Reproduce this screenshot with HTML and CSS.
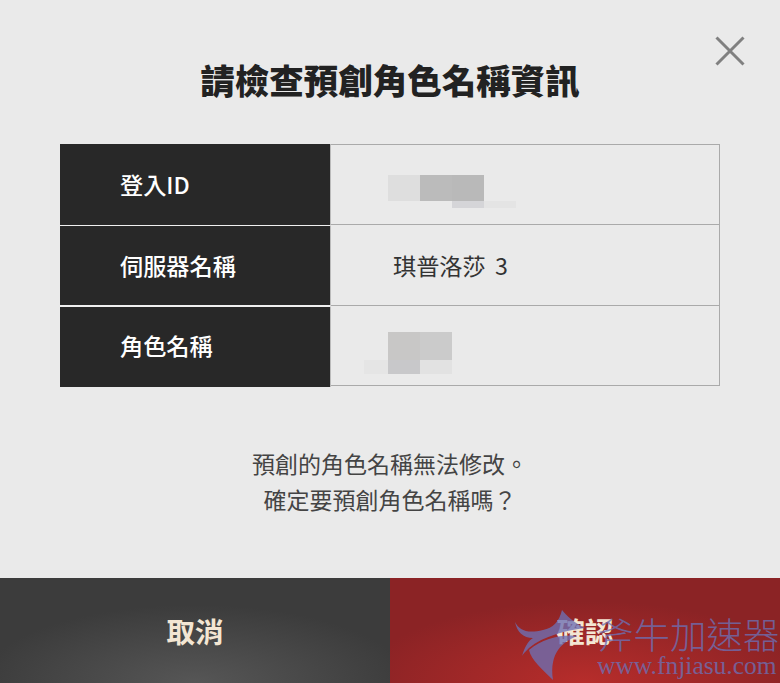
FILE: index.html
```html
<!DOCTYPE html>
<html lang="zh-Hant">
<head>
<meta charset="utf-8">
<title>請檢查預創角色名稱資訊</title>
<link rel="stylesheet" href="styles.css">
</head>
<body>
<div class="dialog">
  <button class="close" aria-label="關閉">
    <svg width="30" height="30" viewBox="0 0 30 30"><path d="M1.5 1.5 L28.5 28.5 M28.5 1.5 L1.5 28.5" stroke="#808080" stroke-width="3" fill="none"/></svg>
  </button>
  <h1 class="title">請檢查預創角色名稱資訊</h1>
  <div class="table">
    <div class="row row-a">
      <div class="label">登入ID</div>
      <div class="value">
        <div class="mosaic mosaic-id">
          <i class="c1"></i><i class="c2"></i><i class="c3"></i><i class="empty"></i>
          <i class="empty"></i><i class="empty"></i><i class="c4"></i><i class="c5"></i>
        </div>
      </div>
    </div>
    <div class="row row-b">
      <div class="label">伺服器名稱</div>
      <div class="value server">琪普洛莎 3</div>
    </div>
    <div class="row row-c">
      <div class="label">角色名稱</div>
      <div class="value">
        <div class="mosaic mosaic-name">
          <i class="empty"></i><i class="d1"></i><i class="d2"></i>
          <i class="d3"></i><i class="d4"></i><i class="d5"></i>
        </div>
      </div>
    </div>
  </div>
  <p class="note">預創的角色名稱無法修改。<br>確定要預創角色名稱嗎？</p>
  <div class="actions">
    <button class="btn cancel">取消</button>
    <button class="btn confirm">確認</button>
  </div>
  <div class="watermark">
    <svg class="wm-logo" width="90" height="73" viewBox="0 0 90 73">
      <path d="M2 12 C6 20 14 24 30 20 C40 18 46 12 49 0 C54 6 60 12 72 18 C55 20 30 26 16 38 C12 42 10 44 9 46 C12 36 16 30 20 28 C10 28 4 22 2 12Z" fill="#6d70b4"/>
      <path d="M16 40 C30 28 50 24 64 26 C50 32 36 42 40 70 C30 60 18 50 16 40Z" fill="#6d70b4"/>
    </svg>
    <div class="wm-text">
      <div class="wm-cn">斧牛加速器</div>
      <div class="wm-en">www.fnjiasu.com</div>
    </div>
  </div>
</div>
</body>
</html>
```
FILE: styles.css
```css
* { box-sizing: border-box; }
html, body { margin: 0; padding: 0; }
body { width: 780px; height: 683px; overflow: hidden; background: #eaeaea; font-family: "Noto Sans CJK TC", "Noto Sans", sans-serif; }
.dialog { position: relative; width: 780px; height: 683px; display: flex; flex-direction: column; align-items: center; background: #eaeaea; overflow: hidden; }
.close { position: absolute; top: 36px; right: 35px; width: 30px; height: 30px; padding: 0; border: 0; background: none; display: block; }
.close svg { display: block; }
.title { margin: 53px 0 0; height: 55px; font-size: 34.5px; line-height: 52px; font-weight: 900; color: #222; white-space: nowrap; }
.table { width: 660px; margin-top: 36px; display: flex; flex-direction: column; }
.row { display: flex; }
.row-a { height: 81px; }
.row-b { height: 81px; }
.row-c { height: 80px; }
.label { width: 271px; background: #282828; color: #fff; font-size: 23.2px; font-weight: 500; padding-left: 60px; padding-bottom: 2px; display: flex; align-items: center; border-right: 1px solid #bbb; }
.row-b .label { border-top: 1px solid #f0f0f0; border-bottom: 1px solid #f0f0f0; }
.row-c .label { border-top: 1px solid #f0f0f0; margin-bottom: -1px; padding-bottom: 4px; }
.value { flex: 1; border-right: 1px solid #aaa; border-bottom: 1px solid #aaa; position: relative; display: flex; align-items: center; }
.row-a .value { border-top: 1px solid #aaa; }
.server { padding-left: 62px; font-size: 23.2px; color: #333; padding-bottom: 1px; word-spacing: 4px; }
.mosaic { position: absolute; display: grid; grid-template-columns: repeat(4, 32px); }
.mosaic-id { left: 57px; top: 30px; grid-template-rows: 26px 7px; }
.mosaic-name { left: 33px; top: 26px; grid-template-columns: 24px 32px 32px; grid-template-rows: 28px 14px; }
.mosaic i { display: block; }
.c1 { background: #dedede; }
.c2 { background: #bbb; }
.c3 { background: #b9b9b9; }
.c4 { background: #d5d5d8; }
.c5 { background: #e4e4e4; }
.d1 { background: #c8c7c6; }
.d2 { background: #cbcbcb; }
.d3 { background: #e5e5e5; }
.d4 { background: #c8c8ca; }
.d5 { background: #e2e2e2; }
.note { margin: 60px 0 0; font-size: 23px; line-height: 35.5px; color: #444; text-align: center; }
.actions { position: absolute; left: 0; right: 0; bottom: 0; height: 105px; display: flex; }
.btn { flex: 1; height: 105px; border: 0; padding: 0 0 1px; font-family: inherit; font-size: 28.5px; font-weight: 700; color: #f3e6d3; }
.cancel { background: radial-gradient(ellipse 215px 78px at 50% 100%, #565656 0%, #3c3c3c 100%); }
.confirm { background: radial-gradient(ellipse 225px 82px at 50% 100%, #b72d2b 0%, #8b2325 100%); }
.watermark { position: absolute; left: 513px; top: 610px; width: 267px; height: 73px; display: flex; pointer-events: none; opacity: .78; }
.wm-logo { flex: none; }
.wm-text { position: absolute; left: 84px; top: 0; width: 183px; overflow: hidden; }
.wm-cn { font-family: "Noto Sans CJK SC", sans-serif; font-weight: 300; font-size: 36.5px; line-height: 48px; color: #6d70b4; white-space: nowrap; }
.wm-en { font-family: "Liberation Serif", serif; font-size: 25.5px; line-height: 26px; margin-top: -5px; color: #6d70b4; white-space: nowrap; }
```
